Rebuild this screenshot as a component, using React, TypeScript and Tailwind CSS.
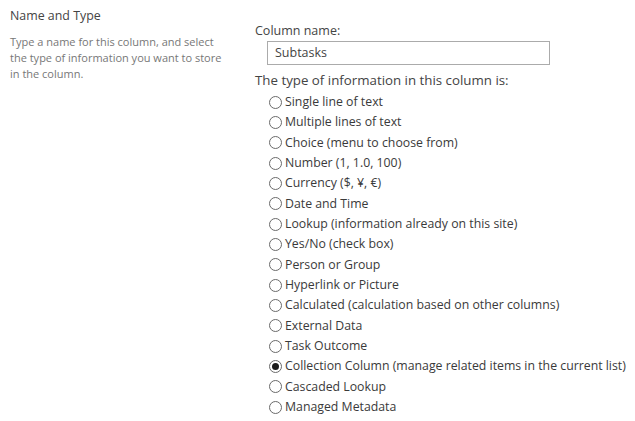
import React from "react";

const options = [
  "Single line of text",
  "Multiple lines of text",
  "Choice (menu to choose from)",
  "Number (1, 1.0, 100)",
  "Currency ($, ¥, €)",
  "Date and Time",
  "Lookup (information already on this site)",
  "Yes/No (check box)",
  "Person or Group",
  "Hyperlink or Picture",
  "Calculated (calculation based on other columns)",
  "External Data",
  "Task Outcome",
  "Collection Column (manage related items in the current list)",
  "Cascaded Lookup",
  "Managed Metadata",
];

function Radio({ checked }: { checked: boolean }) {
  return (
    <span className="flex h-[13px] w-[13px] shrink-0 items-center justify-center rounded-full border border-[#6a6a6a] bg-white">
      {checked && <span className="h-[7px] w-[7px] rounded-full bg-[#1a1a1a]" />}
    </span>
  );
}

export default function App() {
  return (
    <div
      className="flex h-[421px] w-[635px] bg-white text-[#444]"
      style={{ fontFamily: '"Open Sans", "Noto Sans", sans-serif' }}
    >
      <div className="w-[255px] shrink-0 pl-[10px] pt-[6px]">
        <div className="text-[12.4px] leading-[20px] text-[#444]">Name and Type</div>
        <div className="mt-[8px] w-[222px] text-[11px] leading-[16px] text-[#777]">
          Type a name for this column, and select the type of information you want to store in the column.
        </div>
      </div>
      <div className="flex flex-col pt-[21px]">
        <div className="text-[12.5px] leading-[20px]">Column name:</div>
        <div className="ml-[12px] flex h-[24px] w-[283px] items-center border border-[#ababab] px-[7px] text-[12.5px] text-[#444]">
          Subtasks
        </div>
        <div className="mt-[5px] text-[13.3px] leading-[20px]">The type of information in this column is:</div>
        <div className="ml-[14px] mt-[2px] flex flex-col">
          {options.map((o, i) => (
            <div key={o} className="flex h-[20.33px] items-center gap-[3px] text-[12.3px]">
              <Radio checked={i === 13} />
              <span className="whitespace-nowrap text-[#3a3a3a]">{o}</span>
            </div>
          ))}
        </div>
      </div>
    </div>
  );
}
